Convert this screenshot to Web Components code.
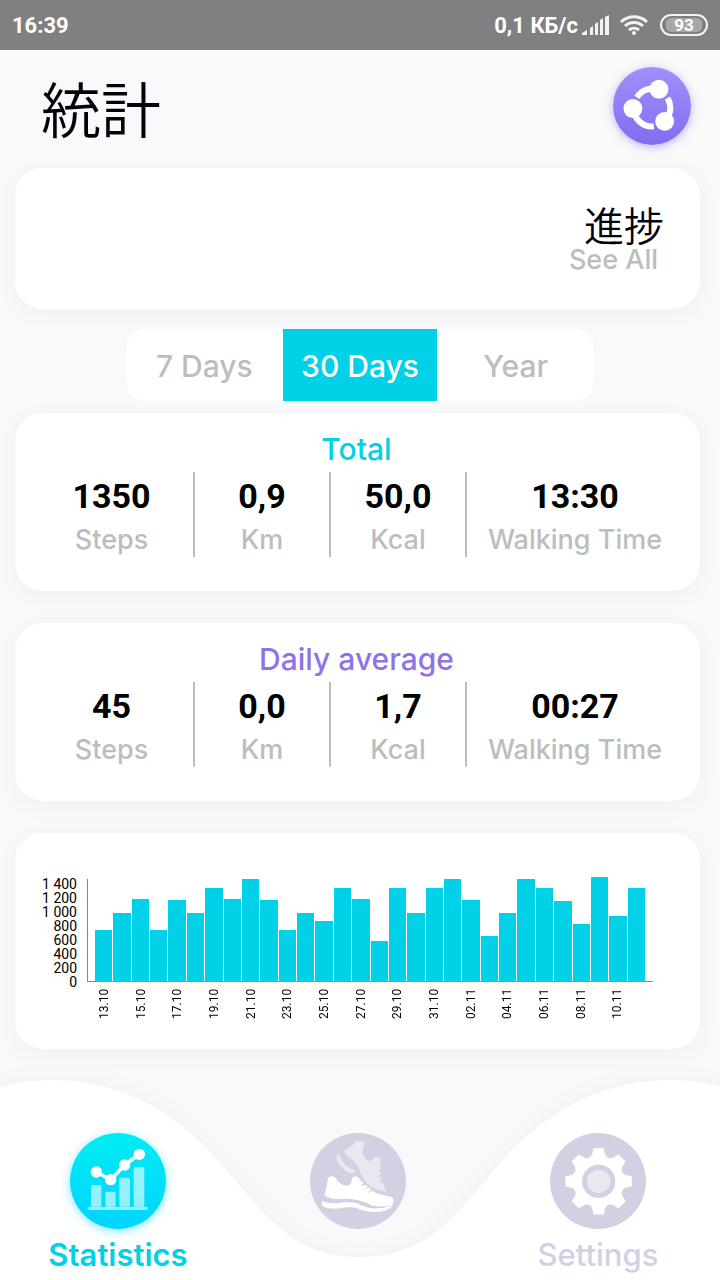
<!DOCTYPE html>
<html lang="ja">
<head>
<meta charset="utf-8">
<meta name="viewport" content="width=device-width, initial-scale=1">
<title>統計</title>
<style>
    body {
        margin: 0;
        background-color: #f9f9f9;
        color: #02020f;
        font-family: Inter, "Noto Sans CJK JP", sans-serif;
        --accent: #00d1e6;
        --violet: #8f73e6;
        --muted: #bdbdbd;
        --idle: #d3d0e4;
    }
</style>
</head>
<body>
<step-app></step-app>

<script>
class StatusBar extends HTMLElement {

    constructor() {
        super();
        this.shadowDOM = this.attachShadow({mode: "open"});
    }

    connectedCallback() {
        this.shadowDOM.innerHTML = `
        <style>
            :host {
                display: flex;
                align-items: center;
                justify-content: space-between;
                height: 50px;
                padding: 0 12px;
                background-color: #808080;
                color: #fff;
                font: 700 22px Roboto, sans-serif;
            }

            .right {
                display: flex;
                align-items: center;
                gap: 4px;
            }

            .wifi {
                margin: 0 8px 0 6px;
            }

            svg {
                display: block;
            }

            .battery {
                box-sizing: border-box;
                width: 48px;
                height: 22px;
                padding: 2px 4px;
                border: 2px solid #f2f2f2;
                border-radius: 11px;
            }

            .battery span {
                display: block;
                border-radius: 5px;
                background-color: #a8a8a8;
                font-size: 17px;
                line-height: 14px;
                text-align: center;
            }
        </style>

        <span>${this.getAttribute("time")}</span>
        <div class="right">
            <span>${this.getAttribute("speed")}</span>
            <svg width="28" height="22" viewBox="0 0 28 22" fill="#f2f2f2">
                <path d="M0 21v-2l5-3v5zM8 14l3-2v9H8zM13 10l3-2v13h-3zM18 6l3-2v17h-3zM23 3l4-2v20h-4z"/>
            </svg>
            <svg class="wifi" width="28" height="22" viewBox="0 0 28 22" fill="none" stroke="#f2f2f2" stroke-width="3">
                <path d="M1 8a19 19 0 0 1 26 0M5 12a13 13 0 0 1 18 0M9 16a8 8 0 0 1 10 0"/>
                <circle cx="14" cy="19" r="2" fill="#f2f2f2" stroke="none"/>
            </svg>
            <div class="battery"><span>${this.getAttribute("battery")}</span></div>
        </div>`;
    }
}

class AppHeader extends HTMLElement {

    constructor() {
        super();
        this.shadowDOM = this.attachShadow({mode: "open"});
    }

    connectedCallback() {
        this.shadowDOM.innerHTML = `
        <style>
            :host {
                display: flex;
                align-items: center;
                justify-content: space-between;
                height: 112px;
                padding: 0 29px 6px 41px;
            }

            h1 {
                margin: 0;
                padding-top: 2px;
                font: 350 60px/80px "Noto Sans CJK JP", sans-serif;
            }

            button {
                width: 78px;
                height: 78px;
                padding: 0;
                border: 0;
                border-radius: 50%;
                background: linear-gradient(#a08ffb, #846cf0);
                box-shadow: 0 2px 8px rgba(132, 108, 240, 0.5);
            }

            svg {
                display: block;
                width: 100%;
            }
        </style>

        <h1><slot></slot></h1>
        <button aria-label="Share">
            <svg viewBox="0 0 231 231" fill="none" stroke="#fff" stroke-width="18">
                <path d="M71 90A55 55 0 0 1 136 67M161 92A55 55 0 0 1 153 161M61 123A55 55 0 0 0 121 176"/>
                <g fill="#fff" stroke="none">
                    <circle cx="136" cy="66" r="28"/>
                    <circle cx="59" cy="123" r="28"/>
                    <circle cx="153" cy="161" r="28"/>
                </g>
            </svg>
        </button>`;
    }
}

class AppCard extends HTMLElement {

    constructor() {
        super();
        this.shadowDOM = this.attachShadow({mode: "open"});
    }

    connectedCallback() {
        this.shadowDOM.innerHTML = `
        <style>
            :host {
                display: block;
                margin: 0 20px 0 15px;
                border-radius: 28px;
                background-color: #fff;
                box-shadow: 0 5px 24px rgba(0, 0, 0, 0.04);
            }
        </style>

        <slot></slot>`;
    }
}

class ProgressSummary extends HTMLElement {

    constructor() {
        super();
        this.shadowDOM = this.attachShadow({mode: "open"});
    }

    connectedCallback() {
        this.shadowDOM.innerHTML = `
        <style>
            :host {
                display: flex;
                flex-direction: column;
                align-items: flex-end;
                padding: 38px 36px 37px;
            }

            h2 {
                margin: 0;
                font-size: 40px;
                font-weight: 350;
                line-height: 42px;
            }

            a {
                padding-right: 6px;
                color: var(--muted);
                font-size: 27px;
                font-weight: 500;
                line-height: 24px;
                text-decoration: none;
            }
        </style>

        <h2><slot></slot></h2>
        <a href="#all">See All</a>`;
    }
}

class PeriodTabs extends HTMLElement {

    constructor() {
        super();
        this.shadowDOM = this.attachShadow({mode: "open"});
    }

    connectedCallback() {
        const tabs = this.getAttribute("tabs").split(",");
        this.selected = this.getAttribute("selected");

        this.shadowDOM.innerHTML = `
        <style>
            :host {
                display: grid;
                grid-template-columns: 156fr 154fr 156fr;
                width: 65%;
                margin: 20px auto 12px;
                border-radius: 20px;
                overflow: hidden;
                background-color: #fff;
            }

            button {
                height: 72px;
                padding: 2px 0 0;
                border: 0;
                background: none;
                color: var(--muted);
                font: inherit;
                font-size: 30px;
                font-weight: 500;
            }

            button[aria-pressed="true"] {
                background-color: var(--accent);
                color: #fff;
            }
        </style>

        ${tabs.map(tab => `<button aria-pressed="${tab === this.selected}">${tab}</button>`).join("")}`;

        const buttons = this.shadowDOM.querySelectorAll("button");
        buttons.forEach(button => {
            button.addEventListener("click", () => {
                buttons.forEach(b => b.setAttribute("aria-pressed", b === button));
            });
        });
    }
}

class StatSummary extends HTMLElement {

    constructor() {
        super();
        this.shadowDOM = this.attachShadow({mode: "open"});
    }

    connectedCallback() {
        const labels = ["Steps", "Km", "Kcal", "Walking Time"];
        const values = this.getAttribute("values").split(";");

        this.shadowDOM.innerHTML = `
        <style>
            :host {
                display: block;
                padding: 16px 17px 34px 15px;
                text-align: center;
            }

            h2 {
                margin: 0;
                padding-bottom: 2px;
                color: var(--title-color);
                font-size: 30px;
                font-weight: 500;
                line-height: 41px;
            }

            dl {
                display: grid;
                grid-template-columns: 165fr 136fr 136fr 216fr;
                margin: 0;
            }

            div {
                display: flex;
                flex-direction: column-reverse;
                border-right: 2px solid var(--muted);
            }

            div:last-child {
                border-right: 0;
            }

            dt {
                padding-top: 2px;
                color: var(--muted);
                font-size: 27px;
                font-weight: 500;
                line-height: 35px;
                white-space: nowrap;
            }

            dd {
                margin: 0;
                color: #000;
                font: 700 34px/48px Roboto, sans-serif;
            }
        </style>

        <h2><slot></slot></h2>
        <dl>
            ${labels.map((label, i) => `<div><dt>${label}</dt><dd>${values[i]}</dd></div>`).join("")}
        </dl>`;
    }
}

class StepsChart extends HTMLElement {

    constructor() {
        super();
        this.shadowDOM = this.attachShadow({mode: "open"});
    }

    set days(days) {
        this._days = days;
        this.render();
    }

    render() {
        const ticks = ["1 400", "1 200", "1 000", "800", "600", "400", "200", "0"];
        const dates = ["13.10", "15.10", "17.10", "19.10", "21.10", "23.10", "25.10", "27.10",
            "29.10", "31.10", "02.11", "04.11", "06.11", "08.11", "10.11"];

        this.shadowDOM.innerHTML = `
        <style>
            :host {
                display: grid;
                grid-template-columns: 62px 1fr;
                column-gap: 10px;
                padding: 44px 47px 28px 0;
                font: 14px/14px Roboto, sans-serif;
                color: #000;
            }

            .ticks {
                text-align: right;
            }

            .plot {
                display: grid;
                grid-template-columns: repeat(30, 1fr);
                column-gap: 1px;
                align-items: end;
                align-content: end;
                height: 103px;
                margin-top: 2px;
                padding: 0 8px 0 7px;
                border-left: 1px solid #888;
                background: linear-gradient(#888, #888) bottom / 100% 1px no-repeat;
            }

            .plot i {
                background-color: var(--accent);
            }

            .dates {
                display: grid;
                grid-template-columns: repeat(15, 1fr);
                grid-column: 2;
                padding: 0 8px;
                font-size: 12px;
                line-height: 18px;
            }

            .dates span {
                height: 32px;
                writing-mode: vertical-rl;
                transform: rotate(180deg);
                justify-self: start;
                text-align: right;
            }
        </style>

        <div class="ticks">${ticks.map(t => `<div>${t}</div>`).join("")}</div>
        <div class="plot">${this._days.map(h => `<i style="height: ${h}px"></i>`).join("")}</div>
        <div class="dates">${dates.map(d => `<span>${d}</span>`).join("")}</div>`;
    }
}

class NavItem extends HTMLElement {

    constructor() {
        super();
        this.shadowDOM = this.attachShadow({mode: "open"});
    }

    icon(name) {
        if (name === "stats") {
            return `
            <g fill="#fff" opacity="0.58">
                <rect x="63" y="156" width="31" height="65" rx="5"/>
                <rect x="106" y="176" width="31" height="45" rx="5"/>
                <rect x="148" y="134" width="32" height="87" rx="5"/>
                <rect x="191" y="102" width="32" height="119" rx="5"/>
                <rect x="53" y="221" width="181" height="10" rx="5"/>
            </g>
            <path d="M79 117l43 23 42-44 44-32" fill="none" stroke="#fff" stroke-width="11"/>
            <g fill="#fff">
                <circle cx="79" cy="117" r="17"/>
                <circle cx="122" cy="140" r="17"/>
                <circle cx="164" cy="96" r="17"/>
                <circle cx="208" cy="64" r="17"/>
            </g>`;
        }
        if (name === "shoes") {
            return `
            <g fill="#e8e8f1">
                <path d="M105 49Q127 42 135 27Q147 19 162 27Q164 36 158 50Q156 65 168 78Q181 92 192 74Q205 66 211 79Q211 94 212 108L204 110L212 116V126L203 128L213 134L215 143L206 146L218 151L230 176Q207 173 192 166Q164 152 151 116Q137 84 105 63Z"/>
                <path d="M89 60Q82 63 79 74Q79 84 85 92C97 102 108 122 127 121Q134 116 142 117C124 107 111 103 99 86Q88 73 89 60Z"/>
            </g>
            <g fill="#fff">
                <path d="M54 136Q57 129 67 130Q76 131 82 143Q92 155 106 158Q128 158 126 135Q132 127 144 132Q151 142 160 149L154 160L168 155L173 161L163 170L179 163L184 169L173 180L188 173Q198 183 213 185Q237 189 248 194Q254 208 246 216Q218 225 183 217Q148 196 104 197Q69 202 43 188Q51 164 54 136Z"/>
                <path d="M36 203Q51 211 80 211Q114 204 142 211Q170 228 200 226Q232 225 248 215Q241 231 216 235Q181 240 153 230Q126 217 94 226Q59 229 40 222Q35 216 36 203Z"/>
            </g>`;
        }
        // one tooth, turned eight times round the hub
        const teeth = [0, 45, 90, 135, 180, 225, 270, 315].map(angle =>
            `<path transform="rotate(${angle})" d="M0 0L-29 -70C-19 -74 -18 -84 -15 -99H15C18 -84 19 -74 29 -70Z"/>`
        ).join("");
        return `
        <g transform="translate(146 145)">
            <g fill="#fff" stroke="#fff" stroke-width="1">${teeth}</g>
            <circle r="50" fill="#d3d0e4"/>
            <circle r="35" fill="#e8e8f1"/>
        </g>`;
    }

    connectedCallback() {
        this.shadowDOM.innerHTML = `
        <style>
            :host {
                display: block;
                color: var(--idle);
            }

            :host([active]) {
                color: var(--accent);
            }

            a {
                display: flex;
                flex-direction: column;
                align-items: center;
                gap: 7px;
                color: inherit;
                font-size: 31px;
                font-weight: 500;
                line-height: 38px;
                text-decoration: none;
            }

            svg {
                width: 96px;
                height: 96px;
                border-radius: 50%;
                background-color: var(--idle);
            }

            :host([active]) a {
                font-weight: 600;
            }

            :host([active]) svg {
                background: linear-gradient(#00edf2, #00d4ff);
                box-shadow: 0 2px 10px rgba(0, 212, 255, 0.5);
            }
        </style>

        <a href="#${this.getAttribute("icon")}" aria-label="${this.getAttribute("icon")}">
            <svg viewBox="0 0 288 288">${this.icon(this.getAttribute("icon"))}</svg>
            <slot></slot>
        </a>`;
    }
}

class BottomNav extends HTMLElement {

    constructor() {
        super();
        this.shadowDOM = this.attachShadow({mode: "open"});
    }

    connectedCallback() {
        this.shadowDOM.innerHTML = `
        <style>
            :host {
                display: grid;
                margin-top: auto;
                padding-top: 30px;
            }

            .wave, nav {
                grid-area: 1 / 1;
            }

            .wave {
                width: 100%;
                height: 200px;
                overflow: visible;
                filter: drop-shadow(0 0 10px rgba(0, 0, 0, 0.04));
            }

            nav {
                display: grid;
                grid-template-columns: repeat(3, 1fr);
                column-gap: 4px;
                padding: 53px 4px 0 0;
                z-index: 1;
            }
        </style>

        <svg class="wave" viewBox="0 0 720 200" preserveAspectRatio="none" fill="#fff">
            <path d="M0 7Q25 0 52 0C130 0 180 38 220 83C262 130 290 177 360 177C430 177 460 130 500 83C540 38 594 0 672 0Q698 0 720 7V200H0Z"/>
        </svg>
        <nav>
            <slot></slot>
        </nav>`;
    }
}

class StepApp extends HTMLElement {

    constructor() {
        super();
        this.shadowDOM = this.attachShadow({mode: "open"});
    }

    connectedCallback() {
        this.shadowDOM.innerHTML = `
        <style>
            :host {
                display: flex;
                flex-direction: column;
                min-height: 100vh;
                overflow: hidden;
            }

            main {
                display: flex;
                flex-direction: column;
            }

            .stats {
                display: flex;
                flex-direction: column;
                gap: 32px;
            }

            .total {
                --title-color: var(--accent);
            }

            .average {
                --title-color: var(--violet);
            }
        </style>

        <status-bar time="16:39" speed="0,1 КБ/с" battery="93"></status-bar>
        <app-header>統計</app-header>
        <main>
            <app-card><progress-summary>進捗</progress-summary></app-card>
            <period-tabs tabs="7 Days,30 Days,Year" selected="30 Days"></period-tabs>
            <div class="stats">
                <app-card><stat-summary class="total" values="1350;0,9;50,0;13:30">Total</stat-summary></app-card>
                <app-card><stat-summary class="average" values="45;0,0;1,7;00:27">Daily average</stat-summary></app-card>
                <app-card><steps-chart></steps-chart></app-card>
            </div>
        </main>
        <bottom-nav>
            <nav-item icon="stats" active>Statistics</nav-item>
            <nav-item icon="shoes"></nav-item>
            <nav-item icon="settings">Settings</nav-item>
        </bottom-nav>`;

        this.shadowDOM.querySelector("steps-chart").days = [
            52, 69, 83, 52, 82, 69, 94, 83, 103, 82, 52, 69, 61, 94, 83,
            41, 94, 69, 94, 103, 82, 46, 69, 103, 94, 81, 58, 105, 66, 94
        ];
    }
}

customElements.define("status-bar", StatusBar);
customElements.define("app-header", AppHeader);
customElements.define("app-card", AppCard);
customElements.define("progress-summary", ProgressSummary);
customElements.define("period-tabs", PeriodTabs);
customElements.define("stat-summary", StatSummary);
customElements.define("steps-chart", StepsChart);
customElements.define("nav-item", NavItem);
customElements.define("bottom-nav", BottomNav);
customElements.define("step-app", StepApp);
</script>
</body>
</html>
